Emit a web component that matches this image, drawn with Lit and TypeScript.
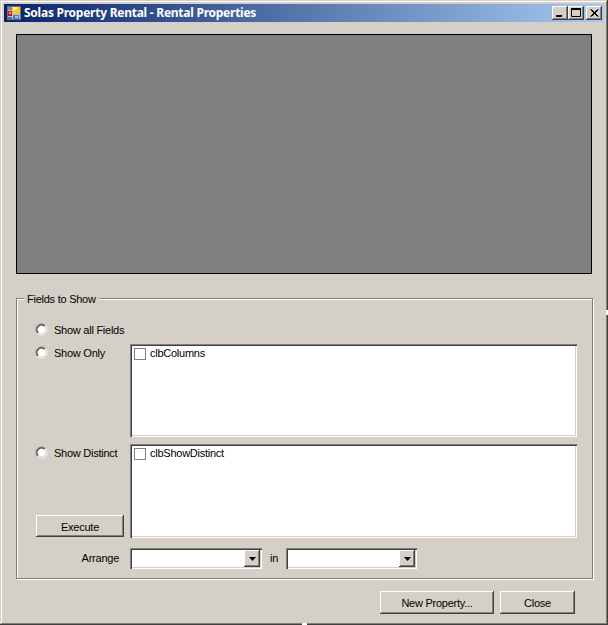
import { LitElement, html, css, svg } from "lit";
import { customElement } from "lit/decorators.js";

const radio = html`<svg class="radio" width="13" height="13" viewBox="0 0 13 13">
  <circle cx="6.5" cy="6.5" r="4.5" fill="#fff"/>
  <path d="M2.6 10.4A5.5 5.5 0 0 1 10.4 2.6" fill="none" stroke="#808080"/>
  <path d="M10.4 2.6A5.5 5.5 0 0 1 2.6 10.4" fill="none" stroke="#fff"/>
  <path d="M3.3 9.7A4.5 4.5 0 0 1 9.7 3.3" fill="none" stroke="#404040" stroke-width="1.2"/>
  <path d="M9.7 3.3A4.5 4.5 0 0 1 3.3 9.7" fill="none" stroke="#d4d0c8"/>
</svg>`;

const arrow = svg`<path d="M0 0h7L3.5 4z" fill="#000"/>`;

@customElement("app-root")
export class AppRoot extends LitElement {
  static styles = css`
    :host { display: block; width: 608px; height: 625px; font: 11px/13px "Liberation Sans", Arial, sans-serif; letter-spacing: -0.25px; color: #000; }
    * { box-sizing: border-box; }
    .window {
      position: relative; width: 608px; height: 625px; padding: 4px; background: #d4d0c8;
      display: flex; flex-direction: column;
      box-shadow: inset -1px -1px 0 #404040, inset 1px 1px 0 #d4d0c8, inset -2px -2px 0 #808080, inset 2px 2px 0 #fff;
    }
    .caption {
      flex: none; height: 18px; display: flex; align-items: center; padding: 0 2px 0 3px;
      background: linear-gradient(90deg, #0a246a, #a6caf0);
    }
    .caption svg.app { flex: none; display: block; margin-top: 2px; }
    .title { margin-left: 1px; flex: 1; color: #fff; font: bold 12px/14px "Noto Sans", sans-serif; letter-spacing: -0.25px; white-space: nowrap; }
    .cbtn {
      flex: none; width: 16px; height: 14px; background: #d4d0c8; display: block;
      box-shadow: inset -1px -1px 0 #404040, inset 1px 1px 0 #fff, inset -2px -2px 0 #808080;
    }
    .cbtn.close { margin-left: 2px; }
    .cbtn svg { display: block; }
    .main { flex: 1; padding: 12px 11px 0 12px; display: flex; flex-direction: column; }
    .preview { flex: none; width: 576px; height: 240px; background: #808080; border: 1px solid #000; }
    fieldset {
      flex: none; margin: 18px 0 0; padding: 0 15px 0 18px; width: 577px; height: 287px; min-width: 0;
      border: 1px solid #808080; box-shadow: inset 1px 1px 0 #fff, 1px 1px 0 #fff;
    }
    legend { margin-left: -11px; padding: 0 3px; background: #d4d0c8; line-height: 13px; }
    legend span { display: block; transform: translateY(1px); }
    .form {
      display: grid; grid-template-columns: 95px 447px; padding-top: 16px;
      grid-template-rows: 23px 93px 101px auto;
    }
    .opt { display: flex; align-items: flex-start; gap: 6px; height: 13px; margin-top: 2px; white-space: nowrap; }
    .opt .radio { flex: none; display: block; }
    .opt span { line-height: 13px; padding-top: 1px; }
    .left { display: flex; flex-direction: column; justify-content: space-between; margin-top: 7px; }
    .list {
      background: #fff; padding: 3px 4px; display: flex; gap: 4px; align-items: flex-start; height: 93px;
      box-shadow: inset 1px 1px 0 #808080, inset 2px 2px 0 #404040, inset -1px -1px 0 #fff, inset -2px -2px 0 #d4d0c8;
    }
    .list.second { height: 94px; margin-top: 7px; }
    .check { flex: none; width: 12px; height: 12px; margin-top: 1px; background: #fff; border: 1px solid #808080; }
    button {
      font: inherit; letter-spacing: inherit; color: #000; background: #d4d0c8; border: 0; padding: 2px 0 0; display: block;
      box-shadow: inset -1px -1px 0 #404040, inset 1px 1px 0 #fff, inset -2px -2px 0 #808080;
    }
    .execute { flex: none; width: 88px; height: 22px; margin: 0 0 1px 1px; }
    .arrange-row { grid-column: 1 / 3; display: flex; align-items: center; margin-top: 10px; height: 21px; }
    .arrange-label { width: 84px; text-align: right; margin-right: 11px; }
    .in { width: 24px; text-align: center; }
    .combo {
      width: 132px; height: 21px; background: #fff; padding: 2px; display: flex; justify-content: flex-end;
      box-shadow: inset 1px 1px 0 #808080, inset 2px 2px 0 #404040, inset -1px -1px 0 #fff, inset -2px -2px 0 #d4d0c8;
    }
    .combo.b { width: 131px; }
    .drop {
      width: 16px; height: 17px; background: #d4d0c8; display: flex; align-items: center; justify-content: center;
      box-shadow: inset -1px -1px 0 #404040, inset 1px 1px 0 #fff, inset -2px -2px 0 #808080;
    }
    .drop svg { display: block; }
    .footer { display: flex; justify-content: flex-end; gap: 6px; margin-top: 12px; padding-right: 18px; }
    .new { width: 114px; height: 23px; }
    .closeb { width: 75px; height: 23px; }
    .grip { position: absolute; background: #fff; }
    .grip.r { left: 606px; top: 310px; width: 2px; height: 5px; }
    .grip.b { left: 302px; top: 623px; width: 5px; height: 2px; }
  `;

  render() {
    return html`<div class="window">
      <div class="caption">
        <svg class="app" width="16" height="16" viewBox="0 0 16 16">
          <rect x="0.5" y="0.5" width="13" height="13" fill="#c8c4bc" stroke="#6e6e6e"/>
          <rect x="1" y="1" width="4" height="3" fill="#8a8a8a"/>
          <rect x="1" y="5" width="4" height="5" fill="#c8141c"/>
          <rect x="2" y="6" width="2" height="2" fill="#f0a090"/>
          <rect x="1" y="11" width="4" height="2" fill="#5a6a90"/>
          <rect x="6" y="1" width="7" height="7" fill="#f8c828"/>
          <rect x="6" y="1" width="4" height="3" fill="#fde88a"/>
          <rect x="6" y="9" width="6" height="4" fill="#3f78d8"/>
          <rect x="8" y="10" width="3" height="2" fill="#a0c4f0"/>
        </svg>
        <span class="title">Solas Property Rental - Rental Properties</span>
        <span class="cbtn"><svg width="16" height="14"><rect x="4" y="9" width="6" height="2" fill="#000"/></svg></span>
        <span class="cbtn"><svg width="16" height="14"><path d="M3.5 3.5h9v7h-9z" fill="none" stroke="#000"/><rect x="3" y="2" width="10" height="2" fill="#000"/></svg></span>
        <span class="cbtn close"><svg width="16" height="14"><path d="M4.5 3.5l7 7M5.5 3.5l7 7M11.5 3.5l-7 7M12.5 3.5l-7 7" stroke="#000" fill="none"/></svg></span>
      </div>
      <div class="main">
        <div class="preview"></div>
        <fieldset>
          <legend><span>Fields to Show</span></legend>
          <div class="form">
            <div class="opt" style="grid-column:1/3">${radio}<span>Show all Fields</span></div>
            <div class="opt">${radio}<span>Show Only</span></div>
            <div class="list"><span class="check"></span><span>clbColumns</span></div>
            <div class="left">
              <div class="opt">${radio}<span>Show Distinct</span></div>
              <button class="execute">Execute</button>
            </div>
            <div class="list second"><span class="check"></span><span>clbShowDistinct</span></div>
            <div class="arrange-row">
              <span class="arrange-label">Arrange</span>
              <div class="combo"><span class="drop"><svg width="7" height="4">${arrow}</svg></span></div>
              <span class="in">in</span>
              <div class="combo b"><span class="drop"><svg width="7" height="4">${arrow}</svg></span></div>
            </div>
          </div>
        </fieldset>
        <div class="footer">
          <button class="new">New Property...</button>
          <button class="closeb">Close</button>
        </div>
      </div>
      <i class="grip r"></i><i class="grip b"></i>
    </div>`;
  }
}
